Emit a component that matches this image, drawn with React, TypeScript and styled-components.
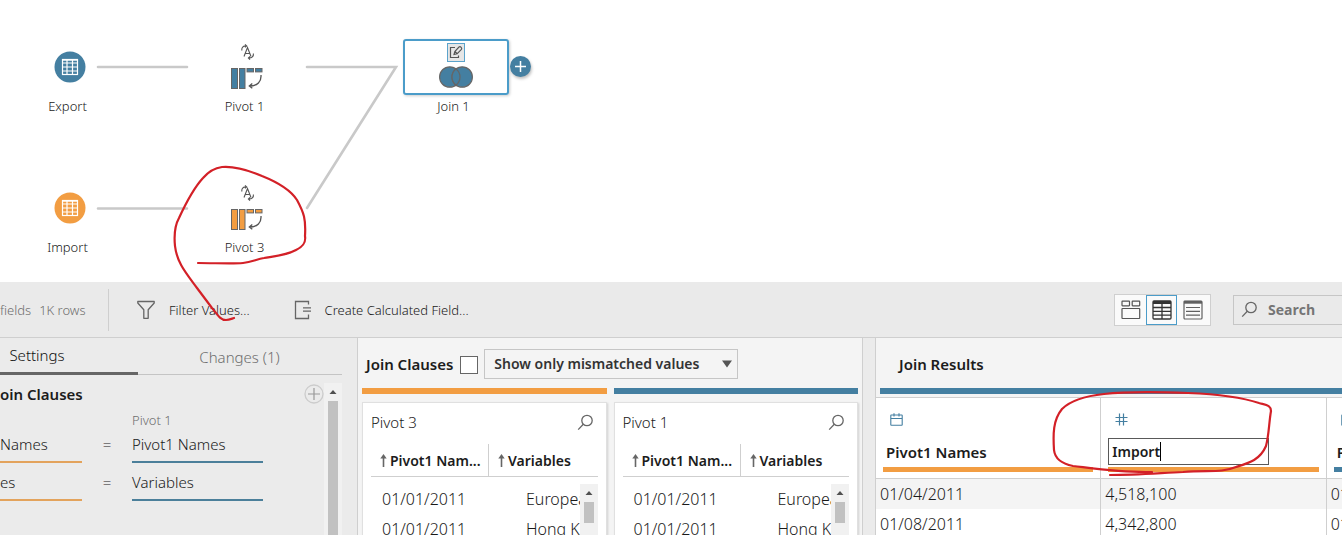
import React from "react";
import styled, { createGlobalStyle } from "styled-components";

const BLUE = "#447fa1";
const ORANGE = "#f29d42";
const LINE = "#cfcfcf";

const GlobalStyle = createGlobalStyle`
  * { box-sizing: border-box; }
  body { margin: 0; overflow: hidden; }
  body, button, input, select {
    font-family: "Noto Sans", "Open Sans", sans-serif;
    font-weight: 300;
    color: #1a1a1a;
  }
  h2, p { margin: 0; }
  svg { flex: none; }
`;

const Page = styled.div`
  position: relative;
  display: flex;
  flex-direction: column;
  height: 100vh;
  overflow: hidden;
  background: #ebebeb;
`;

/* ---------- flow canvas ---------- */

const Canvas = styled.section`
  position: relative;
  flex: none;
  height: 282px;
  background: #fff;
`;

const Edges = styled.svg`
  position: absolute;
  left: 0;
  top: 0;
  stroke: #c9c9c9;
  stroke-width: 2.6;
  stroke-linecap: round;
  fill: none;
`;

const Node = styled.div<{ $x: number; $y: number }>`
  position: absolute;
  left: ${(p) => p.$x}px;
  top: ${(p) => p.$y}px;
  width: 106px;
  display: flex;
  flex-direction: column;
  gap: 2px;
`;

const NodeBody = styled.div<{ $selected?: boolean }>`
  height: 56px;
  display: flex;
  flex-direction: column;
  align-items: center;
  justify-content: center;
  gap: ${(p) => (p.$selected ? "4px" : "7px")};
  padding-bottom: ${(p) => (p.$selected ? "3px" : "0")};
  border: 2px solid ${(p) => (p.$selected ? "#4b9cc9" : "transparent")};
  border-radius: 3px;
  box-shadow: ${(p) => (p.$selected ? "1px 1px 3px rgba(0,0,0,.2)" : "none")};
`;

const NodeLabel = styled.p`
  padding-right: 5px;
  text-align: center;
  font-size: 13px;
  line-height: 18px;
`;

const AddStep = styled.button`
  position: absolute;
  left: 107px;
  top: 17px;
  width: 21px;
  height: 21px;
  padding: 0;
  border: 0;
  border-radius: 50%;
  background: ${BLUE};
  box-shadow: 1px 2px 3px rgba(0, 0, 0, 0.25);
  display: flex;
`;

/* ---------- toolbar ---------- */

const Toolbar = styled.div`
  flex: none;
  display: flex;
  align-items: center;
  height: 56px;
  border-bottom: 1px solid ${LINE};
  background: #eaeaea;
`;

const Summary = styled.div`
  display: flex;
  align-items: center;
  gap: 8px;
  width: 109px;
  height: 42px;
  border-right: 1px solid ${LINE};
  font-size: 13px;
  color: #6e6e6e;
  white-space: nowrap;
`;

const ToolButton = styled.button`
  display: flex;
  align-items: center;
  gap: 13px;
  margin-left: 27px;
  padding: 0;
  border: 0;
  background: none;
  font-size: 13px;
  line-height: 20px;
  white-space: nowrap;

  & + & { margin-left: 44px; }
`;

const ViewSwitch = styled.div`
  display: flex;
  margin-left: auto;
  padding-right: 2px;
  height: 32px;
  border: 1px solid ${LINE};
  background: #fafafa;
`;

const ViewButton = styled.button<{ $active?: boolean }>`
  width: 31px;
  height: 30px;
  padding: 0;
  display: flex;
  align-items: center;
  justify-content: center;
  background: none;
  border: 1px solid ${(p) => (p.$active ? "#4b9cc9" : "transparent")};
`;

const SearchBox = styled.label`
  display: flex;
  align-items: center;
  gap: 10px;
  width: 109px;
  height: 30px;
  margin-left: 22px;
  padding-left: 7px;
  border: 1px solid #c6c6c6;
  border-right: 0;

  input {
    flex: 1;
    min-width: 0;
    padding: 0;
    border: 0;
    outline: 0;
    background: none;
    font-family: "Open Sans", sans-serif;
    font-size: 14px;
    font-weight: 700;
  }
  input::placeholder { color: #757575; opacity: 1; }
`;

/* ---------- settings pane ---------- */

const Panes = styled.div`
  flex: 1;
  min-height: 0;
  display: flex;
`;

const SettingsPane = styled.aside`
  flex: none;
  width: 357px;
  padding-right: 15px;
  display: flex;
  flex-direction: column;
`;

const Tabs = styled.div`
  display: flex;
  flex: none;
  height: 37px;
  border-bottom: 1px solid #c4c4c4;
`;

const Tab = styled.button<{ $active?: boolean }>`
  width: ${(p) => (p.$active ? "138px" : "203px")};
  height: 37px;
  padding: 0 ${(p) => (p.$active ? "64px 0 0" : "0")};
  border: 0;
  border-bottom: ${(p) => (p.$active ? "3px solid #666" : "0")};
  background: none;
  font-size: 15px;
  color: ${(p) => (p.$active ? "#111" : "#6e6e6e")};
`;

const SettingsBody = styled.div`
  flex: 1;
  min-height: 0;
  display: flex;
  padding-top: 8px;
`;

const Clauses = styled.div`
  flex: 1;
  min-width: 0;
`;

const ClausesHead = styled.div`
  display: flex;
  align-items: center;
  justify-content: space-between;
  height: 22px;
`;

const Title = styled.h2`
  font-size: 15px;
  font-weight: 600;
  line-height: 22px;
  color: #1c1c1c;
  white-space: nowrap;
`;

const IconButton = styled.button`
  display: flex;
  padding: 0;
  border: 0;
  background: none;
`;

const ClauseGrid = styled.div`
  display: grid;
  grid-template-columns: 82px 50px 131px;
  grid-template-rows: 29px;
  grid-auto-rows: 38px;
  align-items: start;
  font-size: 15px;
`;

const Source = styled.span`
  grid-column: 3;
  padding-top: 6px;
  font-size: 13px;
  line-height: 18px;
  color: #6e6e6e;
`;

const Field = styled.span<{ $color: string }>`
  height: 29px;
  padding-bottom: 3px;
  border-bottom: 2px solid ${(p) => p.$color};
  line-height: 20px;
  white-space: nowrap;
`;

const Equals = styled.span`
  text-align: center;
  line-height: 20px;
`;

const ScrollTrack = styled.div<{ $overlay?: boolean }>`
  ${(p) => (p.$overlay ? "position: absolute; right: 0; top: 40px; bottom: 0;" : "")}
  width: 18px;
  display: flex;
  flex-direction: column;
  align-items: center;
  background: #f1f1f1;
`;

const ScrollThumb = styled.div<{ $short?: boolean }>`
  width: 10px;
  ${(p) => (p.$short ? "height: 21px;" : "flex: 1;")}
  background: #c1c1c1;
`;

/* ---------- join panels ---------- */

const JoinPanel = styled.section`
  flex: none;
  width: 506px;
  border: 1px solid ${LINE};
  border-width: 0 1px;
  padding: 0 4px;
  display: flex;
  flex-direction: column;
  background: #f4f4f4;
`;

const JoinHead = styled.div`
  flex: none;
  display: flex;
  align-items: center;
  height: 50px;
  padding: 1px 0 0 4px;

  input {
    appearance: none;
    width: 18px;
    height: 18px;
    margin: 2px 6px 0 7px;
    border: 1px solid #666;
    background: #fff;
  }
`;

const SelectWrap = styled.div`
  position: relative;

  select {
    appearance: none;
    display: block;
    width: 254px;
    height: 30px;
    padding: 0 24px 0 9px;
    border: 1px solid #c6c6c6;
    border-radius: 0;
    background: #f4f4f4;
    font-size: 14px;
    font-weight: 600;
    color: #333;
  }
  svg { position: absolute; right: 6px; top: 11px; }
`;

const Sides = styled.div`
  flex: 1;
  min-height: 0;
  display: grid;
  grid-template-columns: 1fr 1fr;
  gap: 7px;
`;

const Side = styled.div`
  display: flex;
  flex-direction: column;
  gap: 8px;
  min-height: 0;
  min-width: 0;
`;

const Bar = styled.div<{ $color: string }>`
  flex: none;
  height: 6px;
  background: ${(p) => p.$color};
`;

const Card = styled.div`
  flex: 1;
  min-height: 0;
  padding: 0 8px;
  display: flex;
  flex-direction: column;
  overflow: hidden;
  border: 1px solid #e0e0e0;
  border-bottom: 0;
  background: #fff;
  box-shadow: 1px 1px 2px rgba(0, 0, 0, 0.15);
`;

const CardHead = styled.div`
  flex: none;
  display: flex;
  align-items: center;
  justify-content: space-between;
  height: 41px;
  padding: 0 4px 3px 0;
  font-size: 15px;
`;

const CardTable = styled.div`
  position: relative;
  flex: 1;
  overflow: hidden;

  table {
    width: 100%;
    table-layout: fixed;
    border-collapse: separate;
    border-spacing: 0;
  }
  th {
    height: 33px;
    padding: 0 0 0 9px;
    border-bottom: 1px solid ${LINE};
    text-align: left;
    font-size: 14px;
    font-weight: 600;
    color: #1c1c1c;
    white-space: nowrap;
  }
  th:first-child { width: 118px; border-right: 1px solid ${LINE}; }
  td {
    height: 30px;
    padding: 0 0 0 11px;
    font-size: 16px;
    white-space: nowrap;
    overflow: hidden;
  }
  td + td { padding-left: 37px; }
  tbody tr:first-child td { height: 37px; padding-top: 7px; }
`;

const SortLabel = styled.span`
  display: flex;
  align-items: center;
  gap: 3px;
`;

/* ---------- results ---------- */

const ResultsPanel = styled.section`
  flex: 1;
  min-width: 0;
  margin-left: 12px;
  border-left: 1px solid ${LINE};
  display: flex;
  flex-direction: column;
  overflow: hidden;
  background: #f4f4f4;
`;

const ResultsHead = styled.div`
  flex: none;
  display: flex;
  align-items: center;
  height: 50px;
  padding: 1px 0 0 23px;
`;

const ResultsBar = styled(Bar)`
  margin: 0 0 3px 4px;
`;

const ResultsTable = styled.table`
  width: 676px;
  table-layout: fixed;
  border-collapse: separate;
  border-spacing: 0;
  background: #fff;

  th {
    height: 82px;
    padding: 15px 7px 5px;
    border: 1px solid ${LINE};
    border-left: 0;
    text-align: left;
    vertical-align: top;
    font-size: 15px;
    font-weight: 600;
    color: #1c1c1c;
  }
  td {
    height: 30px;
    padding: 0 4px;
    border-right: 1px solid ${LINE};
    font-size: 16px;
  }
  tbody tr:nth-child(odd) td { background: #f4f4f4; }
`;

const ColumnHead = styled.div`
  display: flex;
  flex-direction: column;

  > svg { display: block; margin-left: 7px; }
`;

const ColumnName = styled.div`
  height: 28px;
  margin: 12px 0 1px;
  padding-left: 3px;
  line-height: 28px;
`;

const RenameBox = styled.label`
  display: flex;
  align-items: center;
  width: 161px;
  height: 27px;
  margin: 12px 0 2px;
  padding-left: 3px;
  border: 1px solid #595959;

  input {
    field-sizing: content;
    padding: 0;
    border: 0;
    outline: 0;
    background: none;
    font-size: 14px;
    font-weight: 600;
    color: #1c1c1c;
  }
`;

const Caret = styled.span`
  width: 1px;
  height: 19px;
  background: #000;
`;

const ColumnBar = styled(Bar)`
  height: 5px;
`;

const Markup = styled.svg`
  position: absolute;
  left: 0;
  top: 0;
  pointer-events: none;
  fill: none;
  stroke: #d32027;
  stroke-width: 2.2;
  stroke-linecap: round;
  stroke-linejoin: round;
`;

/* ---------- icons ---------- */

const TableDisc = ({ color }: { color: string }) => (
  <svg width="32" height="32" viewBox="0 0 32 32">
    <circle cx="16" cy="16" r="15.5" fill={color} />
    <g fill="none" stroke="#fff" strokeWidth="1.2">
      <rect x="8.5" y="8.5" width="15" height="15" />
      <path d="M13 8v16M18.5 8v16M8 12h16M8 16h16M8 20h16" />
    </g>
    <path d="M8 9h16" stroke="#fff" strokeWidth="1.4" />
  </svg>
);

const RenameGlyph = () => (
  <svg width="16" height="16" viewBox="-1 0 16 16" fill="none" stroke="#555" strokeWidth="1.1">
    <path d="M4 12.5L7.5 3.5L11 12.5M5.2 9.5H10" />
    <path d="M2 6.5C1.2 3.6 3.2 1.8 6.2 1.9M5 .4L6.7 1.9L5 3.4" />
    <path d="M13.4 9.5C13.8 12.2 11.8 14.2 8.800 14M10 12.5L8.4 14L10 15.6" />
  </svg>
);

const PivotGlyph = ({ color }: { color: string }) => (
  <svg width="32" height="23" viewBox="0 0 32 23">
    <g fill={color} stroke="#666" strokeWidth="1">
      <rect x=".5" y="1.5" width="6" height="20" />
      <rect x="8.5" y="1.5" width="5.5" height="20" />
      <rect x="16" y="1.5" width="6.5" height="3.4" />
      <rect x="24.5" y="1.5" width="6.5" height="3.4" />
    </g>
    <path d="M30 8C30.5 14.5 26.5 19 18.5 19M21.3 16.4L18.3 19L21.3 21.3" fill="none" stroke="#555" strokeWidth="1.3" />
  </svg>
);

const EditGlyph = () => (
  <svg width="18" height="19" viewBox="0 0 18 19">
    <rect x=".5" y=".5" width="17" height="18" fill="#e6e6e6" stroke="#5ba3cb" />
    <path d="M8 4.500H3.500V14.500H11.500V12.500" fill="none" stroke="#555" strokeWidth="1.2" />
    <path d="M7 11.500L7.800 8.500L12 4Q13 3.200 14.200 4.300Q15.200 5.400 14.400 6.400L10.200 10.700ZM8 8.500L10 10.500" fill="none" stroke="#555" strokeWidth="1.1" />
  </svg>
);

const JoinGlyph = () => (
  <svg width="34" height="22" viewBox="0 0 34 22" fill="#447fa1" stroke="#666" strokeWidth="1.2">
    <circle cx="10.800" cy="11" r="10.200" />
    <circle cx="23.200" cy="11" r="10.200" />
    <path d="M17 2.900A10.200 10.200 0 0 1 17 19.100A10.200 10.200 0 0 1 17 2.900Z" />
  </svg>
);

const Magnifier = () => (
  <svg width="17" height="17" viewBox="0 0 17 17" fill="none" stroke="#666" strokeWidth="1.3">
    <circle cx="10" cy="6.500" r="5.200" />
    <path d="M6.300 10.200L1.200 15.600" />
  </svg>
);

const FunnelGlyph = () => (
  <svg width="20" height="20" viewBox="0 0 20 20" fill="none" stroke="#666" strokeWidth="1.3">
    <path d="M1.800 1.500H18.200V3L12.200 9.800V18.300H7.800V9.800L1.800 3Z" strokeLinejoin="round" />
  </svg>
);

const CalcGlyph = () => (
  <svg width="18" height="20" viewBox="0 0 18 20" fill="none" stroke="#666" strokeWidth="1.300">
    <path d="M14.500 4.500V1.500H1.500V18.500H14.500V14.500M9 7.800H17M9 11.200H17" />
  </svg>
);

const CardsGlyph = () => (
  <svg width="20" height="20" viewBox="0 0 20 20" fill="none" stroke="#555" strokeWidth="1.200">
    <rect x="1" y="1.200" width="7.500" height="4.600" rx=".5" />
    <rect x="11.200" y="1.200" width="7.500" height="4.600" rx=".5" />
    <rect x="1" y="8.500" width="17.700" height="10" rx=".5" />
  </svg>
);

const GridGlyph = () => (
  <svg width="20" height="20" viewBox="0 0 20 20" fill="none" stroke="#333" strokeWidth="1.300">
    <rect x="1" y="1" width="18" height="18" rx="1" />
    <path d="M1 2.500H19" strokeWidth="3" />
    <path d="M10 3V19M1 7.500H19M1 11.300H19M1 15.100H19" />
  </svg>
);

const ListGlyph = () => (
  <svg width="20" height="20" viewBox="0 0 20 20" fill="none" stroke="#606060" strokeWidth="1.200">
    <rect x="1" y="1" width="18" height="18" rx="1" />
    <path d="M1 2.300H19" strokeWidth="2.800" />
    <path d="M3 7.500H17M3 11.300H17M3 15.100H17" />
  </svg>
);

const PlusCircle = () => (
  <svg width="20" height="20" viewBox="0 0 20 20" fill="none">
    <circle cx="10" cy="10" r="9" stroke="#ccc" strokeWidth="1.300" />
    <path d="M10 4V16M4 10H16" stroke="#999" strokeWidth="1.200" />
  </svg>
);

const ScrollUp = () => (
  <svg width="18" height="18" viewBox="0 0 18 18" fill="#505050">
    <path d="M5.500 11L9 7L12.500 11Z" />
  </svg>
);

const SortUp = () => (
  <svg width="7" height="13" viewBox="0 0 7 13" fill="#666">
    <path d="M3.500 0L6.700 4.500H.3Z" />
    <rect x="2.700" y="3" width="1.600" height="10" />
  </svg>
);

const CalendarGlyph = () => (
  <svg width="13" height="13" viewBox="0 0 13 13" fill="none" stroke={BLUE} strokeWidth="1.100">
    <rect x=".8" y="2" width="11.400" height="10.200" rx=".5" />
    <path d="M1 5.500H12M4 .3V3.500M9 .3V3.500" />
  </svg>
);

const NumberGlyph = () => (
  <svg width="13" height="13" viewBox="0 0 13 13" fill="none" stroke={BLUE} strokeWidth="1.200">
    <path d="M4.500 .5V12.500M8.500 .5V12.500M.5 4.500H12.500M.5 8.500H12.500" />
  </svg>
);

/* ---------- composed parts ---------- */

const JoinSide = ({ name, color }: { name: string; color: string }) => (
  <Side>
    <Bar $color={color} />
    <Card>
      <CardHead>
        {name}
        <IconButton aria-label={`Search ${name}`}><Magnifier /></IconButton>
      </CardHead>
      <CardTable>
        <table>
          <thead>
            <tr>
              <th><SortLabel><SortUp />Pivot1 Nam...</SortLabel></th>
              <th><SortLabel><SortUp />Variables</SortLabel></th>
            </tr>
          </thead>
          <tbody>
            <tr><td>01/01/2011</td><td>European</td></tr>
            <tr><td>01/01/2011</td><td>Hong Kong</td></tr>
          </tbody>
        </table>
        <ScrollTrack $overlay>
          <ScrollUp />
          <ScrollThumb $short />
        </ScrollTrack>
      </CardTable>
    </Card>
  </Side>
);

const clauses = [
  ["Names", "Pivot1 Names"],
  ["es", "Variables"],
];

const results = [
  ["01/04/2011", "4,518,100", "01/04/2011"],
  ["01/08/2011", "4,342,800", "01/08/2011"],
];

export default function App() {
  return (
    <Page>
      <GlobalStyle />
      <Canvas>
        <Edges width="560" height="282">
          <path d="M98 67H187M307 67H396L307 208M98 208.500H187" />
        </Edges>
        <Node $x={17} $y={39}>
          <NodeBody><TableDisc color={BLUE} /></NodeBody>
          <NodeLabel>Export</NodeLabel>
        </Node>
        <Node $x={194} $y={39}>
          <NodeBody><RenameGlyph /><PivotGlyph color={BLUE} /></NodeBody>
          <NodeLabel>Pivot 1</NodeLabel>
        </Node>
        <Node $x={403} $y={39}>
          <NodeBody $selected><EditGlyph /><JoinGlyph /></NodeBody>
          <NodeLabel>Join 1</NodeLabel>
          <AddStep aria-label="Add step">
            <svg width="21" height="21" viewBox="0 0 21 21" stroke="#fff" strokeWidth="1.500">
              <path d="M10.500 5V16M5 10.500H16" />
            </svg>
          </AddStep>
        </Node>
        <Node $x={17} $y={180}>
          <NodeBody><TableDisc color={ORANGE} /></NodeBody>
          <NodeLabel>Import</NodeLabel>
        </Node>
        <Node $x={194} $y={180}>
          <NodeBody><RenameGlyph /><PivotGlyph color={ORANGE} /></NodeBody>
          <NodeLabel>Pivot 3</NodeLabel>
        </Node>
      </Canvas>

      <Toolbar>
        <Summary><span>fields</span><span>1K rows</span></Summary>
        <ToolButton><FunnelGlyph />Filter Values...</ToolButton>
        <ToolButton><CalcGlyph />Create Calculated Field...</ToolButton>
        <ViewSwitch>
          <ViewButton aria-label="Profile view"><CardsGlyph /></ViewButton>
          <ViewButton aria-label="Grid view" $active><GridGlyph /></ViewButton>
          <ViewButton aria-label="List view"><ListGlyph /></ViewButton>
        </ViewSwitch>
        <SearchBox>
          <Magnifier />
          <input type="text" placeholder="Search" aria-label="Search" />
        </SearchBox>
      </Toolbar>

      <Panes>
        <SettingsPane>
          <Tabs>
            <Tab $active>Settings</Tab>
            <Tab>Changes (1)</Tab>
          </Tabs>
          <SettingsBody>
            <Clauses>
              <ClausesHead>
                <Title>oin Clauses</Title>
                <IconButton aria-label="Add clause"><PlusCircle /></IconButton>
              </ClausesHead>
              <ClauseGrid>
                <Source>Pivot 1</Source>
                {clauses.map(([left, right]) => (
                  <React.Fragment key={right}>
                    <Field $color="#e3a35c">{left}</Field>
                    <Equals>=</Equals>
                    <Field $color="#4b7f9a">{right}</Field>
                  </React.Fragment>
                ))}
              </ClauseGrid>
            </Clauses>
            <ScrollTrack>
              <ScrollUp />
              <ScrollThumb />
            </ScrollTrack>
          </SettingsBody>
        </SettingsPane>

        <JoinPanel>
          <JoinHead>
            <Title as="label" htmlFor="mismatched">Join Clauses</Title>
            <input id="mismatched" type="checkbox" />
            <SelectWrap>
              <select aria-label="Value filter">
                <option>Show only mismatched values</option>
              </select>
              <svg width="10" height="8" viewBox="0 0 10 8" fill="#555"><path d="M0 .500H10L5 7.500Z" /></svg>
            </SelectWrap>
          </JoinHead>
          <Sides>
            <JoinSide name="Pivot 3" color={ORANGE} />
            <JoinSide name="Pivot 1" color={BLUE} />
          </Sides>
        </JoinPanel>

        <ResultsPanel>
          <ResultsHead><Title>Join Results</Title></ResultsHead>
          <ResultsBar $color={BLUE} />
          <ResultsTable>
            <thead>
              <tr>
                <th>
                  <ColumnHead>
                    <CalendarGlyph />
                    <ColumnName>Pivot1 Names</ColumnName>
                    <ColumnBar $color={ORANGE} />
                  </ColumnHead>
                </th>
                <th>
                  <ColumnHead>
                    <NumberGlyph />
                    <RenameBox>
                      <input type="text" defaultValue="Import" aria-label="Field name" />
                      <Caret />
                    </RenameBox>
                    <ColumnBar $color={ORANGE} />
                  </ColumnHead>
                </th>
                <th>
                  <ColumnHead>
                    <CalendarGlyph />
                    <ColumnName>Pivot1 Names</ColumnName>
                    <ColumnBar $color={BLUE} />
                  </ColumnHead>
                </th>
              </tr>
            </thead>
            <tbody>
              {results.map((row) => (
                <tr key={row[0]}>
                  {row.map((value, i) => <td key={i}>{value}</td>)}
                </tr>
              ))}
            </tbody>
          </ResultsTable>
        </ResultsPanel>
      </Panes>

      <Markup width="1342" height="535">
        <path d="M198 263C215 263 232 264 243 263C252 262 257 259 264 258C276 256 287 255 296 250C304 246 306 242 305 236C306 219 304 213 297 200C290 189 277 182 262 176C248 170 234 166 222 167C214 168 209 171 203 178C192 190 185 205 179 218C174 227 174 236 175 246C177 263 186 273 197 288L212 308C217 314 220 320 226 320C229 320 231 319 234 318" />
        <path d="M1110 475C1135 475 1160 473 1183 472C1210 470 1221 473 1236 467C1249 463 1260 460 1266 446C1269 435 1269 422 1271 411C1271 405 1266 405 1259 403C1238 396 1212 394 1188 393C1160 392 1131 391 1104 394C1085 396 1070 401 1062 409C1053 420 1053 434 1054 450C1055 459 1063 464 1073 466C1098 469 1125 473 1152 472" />
      </Markup>
    </Page>
  );
}
